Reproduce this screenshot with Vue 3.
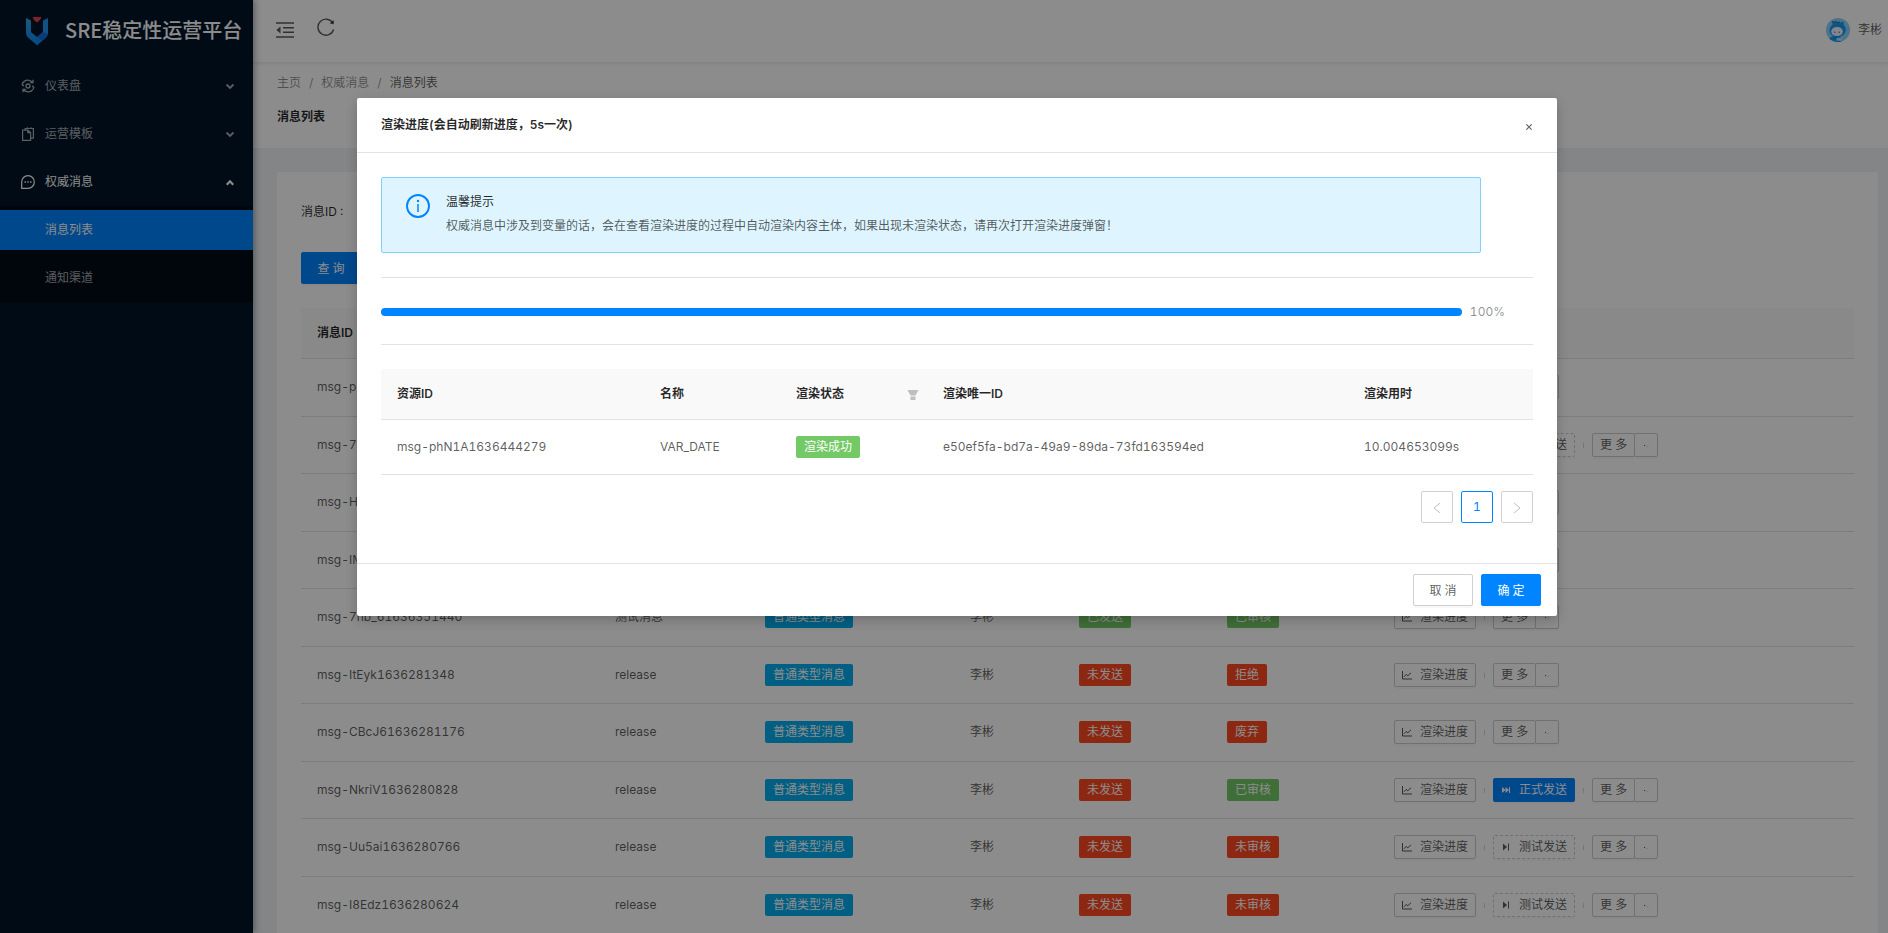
<script setup>
import { ref } from 'vue'

const messageId = ref('')

const rows = [
  { id: 'msg-p' },
  { id: 'msg-7', action: 'test' },
  { id: 'msg-H' },
  { id: 'msg-IM' },
  { id: 'msg-7hb_61636351440', name: '测试消息', type: '普通类型消息', user: '李彬', sent: '已发送', audit: '已审核' },
  { id: 'msg-ItEyk1636281348', name: 'release', type: '普通类型消息', user: '李彬', sent: '未发送', audit: '拒绝' },
  { id: 'msg-CBcJ61636281176', name: 'release', type: '普通类型消息', user: '李彬', sent: '未发送', audit: '废弃' },
  { id: 'msg-NkriV1636280828', name: 'release', type: '普通类型消息', user: '李彬', sent: '未发送', audit: '已审核', action: 'formal' },
  { id: 'msg-Uu5ai1636280766', name: 'release', type: '普通类型消息', user: '李彬', sent: '未发送', audit: '未审核', action: 'test' },
  { id: 'msg-I8Edz1636280624', name: 'release', type: '普通类型消息', user: '李彬', sent: '未发送', audit: '未审核', action: 'test' },
]

const tone = (text) => (text.startsWith('已') ? 'green' : 'red')
</script>

<template>
  <div class="shell">
    <aside class="sider">
      <div class="brand">
        <svg class="brand-logo" viewBox="0 0 22 28" aria-hidden="true">
          <defs>
            <linearGradient id="brandBlue" x1="0" y1="0" x2="0" y2="1">
              <stop offset="0" stop-color="#2fa5e8" />
              <stop offset="1" stop-color="#0a8bf0" />
            </linearGradient>
          </defs>
          <path d="M0 1 L5 3.500 V15 L11 20 V28 L2.500 21 Q0 19 0 16Z" fill="url(#brandBlue)" />
          <path d="M22 1 L17 3.500 V15 L11 20 V28 L19.500 21 Q22 19 22 16Z" fill="#2393ee" />
          <path d="M17 15 L11 20 V28 L19.500 21 L22 17Z" fill="#1668dc" />
          <path d="M11 20 L16 23.800 L11 28 L6 23.800Z" fill="#0b8fe8" />
          <path d="M6.500 0 H15.500 L14 3 L11 5.500 L8 3Z" fill="#e8414d" />
        </svg>
        <h1>SRE稳定性运营平台</h1>
      </div>
      <nav class="menu">
        <button class="menu-item" type="button">
          <svg class="menu-icon" viewBox="0 0 14 14" fill="none" stroke="currentColor" stroke-width="1.300">
            <circle cx="7" cy="7" r="2" />
            <path d="M1 6 C1.500 2.500 5 .7 8 1.300 C9.500 1.600 10.500 2.200 11.300 3 M13 8 C12.500 11.500 9 13.300 6 12.700 C4.500 12.400 3.500 11.800 2.700 11 M12 .8 V3.500 H9.200 M2 13.200 V10.500 H4.800 M1.200 6.500 H3 M11 7.500 H12.800" />
          </svg>
          <span>仪表盘</span>
          <svg class="arrow" viewBox="0 0 10 10" fill="none" stroke="currentColor" stroke-width="1.800"><path d="M1.500 3.500 L5 7 L8.500 3.500" /></svg>
        </button>
        <button class="menu-item" type="button">
          <svg class="menu-icon" viewBox="0 0 14 14" fill="none" stroke="currentColor" stroke-width="1.200">
            <path d="M4 3 H1.600 V13.300 H9.600 V11.500" />
            <path d="M4.200 1.500 H12.400 V11.200 H9.600 V5.500 L6.800 3.200 H4.200Z M6.500 .3 V2 M10 .3 V2 M6.800 3.200 V5.600 H9.600" />
          </svg>
          <span>运营模板</span>
          <svg class="arrow" viewBox="0 0 10 10" fill="none" stroke="currentColor" stroke-width="1.800"><path d="M1.500 3.500 L5 7 L8.500 3.500" /></svg>
        </button>
        <button class="menu-item open" type="button">
          <svg class="menu-icon" viewBox="0 0 14 14" fill="none" stroke="currentColor" stroke-width="1.200">
            <path d="M.7 13.300 V7 A6.300 6.300 0 1 1 7 13.300Z" />
            <path d="M3.500 7 H4.900 M6.300 7 H7.700 M9.100 7 H10.500" stroke-width="1.500" />
          </svg>
          <span>权威消息</span>
          <svg class="arrow" viewBox="0 0 10 10" fill="none" stroke="currentColor" stroke-width="2.200"><path d="M1.800 7.800 L5 4.300 L8.200 7.800" /></svg>
        </button>
        <div class="submenu">
          <a class="sub-item selected" href="#list">消息列表</a>
          <a class="sub-item" href="#channel">通知渠道</a>
        </div>
      </nav>
    </aside>

    <main class="main">
      <header class="topbar">
        <button class="icon-btn" type="button" aria-label="收起菜单">
          <svg width="18" height="16" viewBox="0 0 18 16" fill="none" stroke="currentColor" stroke-width="1.600">
            <path d="M0 1 H18 M7 5.700 H18 M7 10.300 H18 M0 15 H18" />
            <path d="M4.500 4.500 V11.500 L.3 8Z" fill="currentColor" stroke="none" />
          </svg>
        </button>
        <button class="icon-btn reload" type="button" aria-label="刷新">
          <svg width="18" height="18" viewBox="0 0 18 18" fill="none" stroke="currentColor" stroke-width="1.400">
            <path d="M15.800 5 A8 8 0 1 0 16.600 11.500" />
            <path d="M16.800 2 V6.300 L12.600 5.600Z" fill="currentColor" stroke="none" />
          </svg>
        </button>
        <div class="user">
          <svg width="24" height="24" viewBox="0 0 24 24" aria-hidden="true">
            <circle cx="12" cy="12" r="12" fill="#8fd0fa" />
            <path d="M3 20.500 Q7 17 12 17.500 Q16 18 15 23.700 Q8 25 3 20.500Z" fill="#1299ee" />
            <path d="M7 6 Q5 5 6 3 Q8 2.500 9 4.300 Q12 3.500 15 4.500 L17 3.500 Q18.500 4.500 17.500 6.500 Q20.500 9 19.500 14 Q17 19 11 18.500 Q4 18 3.500 13 Q3.500 9 7 6Z" fill="#159cf0" />
            <path d="M8 4.500 L10 3 L11 4.800 L14 3.800" fill="none" stroke="#35568c" stroke-width=".8" />
            <ellipse cx="11" cy="13.500" rx="5.800" ry="4.600" fill="#f2f3ff" />
            <circle cx="8.800" cy="14.200" r=".7" fill="#4b66ad" />
            <circle cx="13.200" cy="14.200" r=".7" fill="#4b66ad" />
            <path d="M11 20 L17 19.500 L15 23 L10 22.500Z" fill="#b8dcff" />
          </svg>
          <span>李彬</span>
        </div>
      </header>

      <section class="page-head">
        <nav class="crumbs">
          <a href="#home">主页</a><i>/</i><a href="#message">权威消息</a><i>/</i><span>消息列表</span>
        </nav>
        <h2>消息列表</h2>
      </section>

      <section class="content">
        <div class="card">
          <form class="search" @submit.prevent>
            <div class="field">
              <label for="message-id">消息ID :</label>
              <input id="message-id" v-model="messageId" type="text">
            </div>
            <button class="btn primary" type="submit">查 询</button>
          </form>
          <table class="grid list">
            <colgroup>
              <col class="c-id"><col class="c-name"><col class="c-type"><col class="c-user"><col class="c-sent"><col class="c-audit"><col>
            </colgroup>
            <thead>
              <tr><th>消息ID</th><th></th><th></th><th></th><th></th><th></th><th></th></tr>
            </thead>
            <tbody>
              <tr v-for="row in rows" :key="row.id">
                <td>{{ row.id }}</td>
                <td>{{ row.name }}</td>
                <td><span v-if="row.type" class="tag cyan">{{ row.type }}</span></td>
                <td>{{ row.user }}</td>
                <td><span v-if="row.sent" class="tag" :class="tone(row.sent)">{{ row.sent }}</span></td>
                <td><span v-if="row.audit" class="tag" :class="tone(row.audit)">{{ row.audit }}</span></td>
                <td>
                  <div class="actions">
                    <button class="small" type="button">
                      <svg width="10" height="10" viewBox="0 0 10 10" fill="none" stroke="currentColor"><path d="M.5 1 V9 H10 M2 6.800 L4.200 4.400 L5.800 5.800 L9 2.800" /></svg>
                      <span>渲染进度</span>
                    </button>
                    <i class="bar"></i>
                    <template v-if="row.action">
                      <button v-if="row.action === 'formal'" class="small solid" type="button">
                        <svg width="10" height="10" viewBox="0 0 10 10" fill="currentColor"><path d="M1 2 L4.500 5 L1 8Z M4.500 2 L8 5 L4.500 8Z M8 2 H9 V8 H8Z" /></svg>
                        <span>正式发送</span>
                      </button>
                      <button v-else class="small dashed" type="button">
                        <svg width="10" height="10" viewBox="0 0 10 10" fill="currentColor"><path d="M2 1.500 L6 5 L2 8.500Z M7 1.500 H8 V8.500 H7Z" /></svg>
                        <span>测试发送</span>
                      </button>
                      <i class="bar"></i>
                    </template>
                    <div class="split">
                      <button class="small" type="button">更 多</button>
                      <button class="small more" type="button" aria-label="展开">
                        <svg width="6" height="6" viewBox="0 0 6 6"><rect x="1" y="3" width="1" height="1" fill="currentColor" /><path d="M2.500 3.500 L4 5 L5.500 3.500" fill="none" stroke="currentColor" stroke-width=".5" opacity=".3" /></svg>
                      </button>
                    </div>
                  </div>
                </td>
              </tr>
            </tbody>
          </table>
        </div>
      </section>
    </main>

    <div class="mask">
      <div class="modal" role="dialog" aria-labelledby="modal-title">
        <header class="modal-head">
          <h3 id="modal-title">渲染进度(会自动刷新进度，5s一次)</h3>
          <button class="close" type="button" aria-label="关闭">
            <svg width="6" height="6" viewBox="0 0 6 6" fill="none" stroke="currentColor" stroke-width="1.200"><path d="M.3 .3 L5.700 5.700 M5.700 .3 L.3 5.700" /></svg>
          </button>
        </header>
        <div class="modal-body">
          <div class="alert">
            <svg width="24" height="25" viewBox="0 0 24 25" fill="none" stroke="#0084ff" stroke-width="1.900" aria-hidden="true">
              <circle cx="12" cy="13" r="11" />
              <path d="M12 11 V19" stroke-width="1.500" />
              <circle cx="12" cy="8" r="1.200" fill="#0084ff" stroke="none" />
            </svg>
            <div>
              <strong>温馨提示</strong>
              <p>权威消息中涉及到变量的话，会在查看渲染进度的过程中自动渲染内容主体，如果出现未渲染状态，请再次打开渲染进度弹窗！</p>
            </div>
          </div>
          <hr>
          <div class="progress">
            <div class="track" role="progressbar" aria-valuenow="100" aria-label="渲染进度"><div class="fill"></div></div>
            <span>100%</span>
          </div>
          <hr>
          <table class="grid detail">
            <colgroup>
              <col class="d-id"><col class="d-name"><col class="d-state"><col class="d-uid"><col>
            </colgroup>
            <thead>
              <tr>
                <th>资源ID</th>
                <th>名称</th>
                <th>
                  <div class="filter-head">
                    渲染状态
                    <svg width="12" height="12" viewBox="0 0 12 12" fill="#bfbfbf"><path d="M.5 2 H11.500 L8.500 7.500 H3.500Z M3.500 8.500 H8.500 V12 H3.500Z" /></svg>
                  </div>
                </th>
                <th>渲染唯一ID</th>
                <th>渲染用时</th>
              </tr>
            </thead>
            <tbody>
              <tr>
                <td>msg-phN1A1636444279</td>
                <td>VAR_DATE</td>
                <td><span class="tag green">渲染成功</span></td>
                <td>e50ef5fa-bd7a-49a9-89da-73fd163594ed</td>
                <td>10.004653099s</td>
              </tr>
            </tbody>
          </table>
          <div class="pager">
            <button type="button" aria-label="上一页"><svg width="8" height="12" viewBox="0 0 8 12" fill="none" stroke="currentColor"><path d="M7 2 L1 7 L7 12" /></svg></button>
            <button class="current" type="button">1</button>
            <button type="button" aria-label="下一页"><svg width="8" height="12" viewBox="0 0 8 12" fill="none" stroke="currentColor"><path d="M1 2 L7 7 L1 12" /></svg></button>
          </div>
        </div>
        <footer class="modal-foot">
          <button class="btn" type="button">取 消</button>
          <button class="btn primary" type="button">确 定</button>
        </footer>
      </div>
    </div>
  </div>
</template>

<style>
body {
  background: #f0f2f5;
}
</style>

<style scoped>
.shell {
  position: relative;
  display: flex;
  height: 100vh;
  overflow: hidden;
  font-family: Inter, "Noto Sans CJK SC", sans-serif;
  font-size: 12px;
  line-height: 18px;
  font-variant-numeric: tabular-nums;
  color: rgba(0, 0, 0, 0.65);
}
.shell * {
  box-sizing: border-box;
}
button,
input {
  font: inherit;
  color: inherit;
}
button {
  cursor: pointer;
}
a {
  color: inherit;
  text-decoration: none;
}
h1,
h2,
h3,
p {
  margin: 0;
}
h2,
h3 {
  font-size: 12px;
  font-weight: 600;
  color: rgba(0, 0, 0, 0.85);
}

/* side navigation */
.sider {
  position: relative;
  z-index: 1;
  flex: none;
  width: 253px;
  background: #001529;
  color: rgba(255, 255, 255, 0.65);
  box-shadow: 2px 0 6px rgba(0, 21, 41, 0.35);
}
.brand {
  display: flex;
  align-items: center;
  gap: 17px;
  height: 62px;
  padding-left: 26px;
}
.brand-logo {
  width: 22px;
  height: 28px;
}
.brand h1 {
  padding-bottom: 2px;
  font-family: "Noto Sans CJK SC", sans-serif;
  font-size: 20px;
  line-height: 30px;
  font-weight: 500;
  color: #fff;
  white-space: nowrap;
}
.menu-item {
  display: flex;
  align-items: center;
  width: 100%;
  height: 40px;
  margin: 4px 0 8px;
  padding: 0 18px 0 21px;
  border: 0;
  background: none;
}
.menu-item.open {
  margin-bottom: 4px;
  color: #fff;
}
.menu-icon {
  width: 14px;
  height: 14px;
  margin-right: 10px;
}
.arrow {
  width: 10px;
  height: 10px;
  margin-left: auto;
}
.submenu {
  padding: 4px 0;
  background: #000c17;
}
.sub-item {
  display: block;
  padding-left: 45px;
  line-height: 40px;
}
.sub-item.selected {
  margin-bottom: 8px;
  background: #0084ff;
  color: #fff;
}

/* header */
.main {
  flex: 1;
  min-width: 0;
}
.topbar {
  position: relative;
  display: flex;
  align-items: center;
  height: 62px;
  padding: 0 6px 2px 23px;
  background: #fff;
  box-shadow: 0 1px 4px rgba(0, 21, 41, 0.12);
}
.icon-btn {
  display: flex;
  padding: 0;
  border: 0;
  background: none;
}
.reload {
  margin: 0 0 6px 23px;
}
.user {
  display: flex;
  align-items: center;
  gap: 8px;
  margin-left: auto;
}
.page-head {
  height: 86px;
  padding: 12px 24px;
  background: #fff;
}
.crumbs {
  color: rgba(0, 0, 0, 0.45);
  margin-bottom: 16px;
}
.crumbs i {
  margin: 0 8px;
  font-style: normal;
}
.crumbs span {
  color: rgba(0, 0, 0, 0.65);
}
.content {
  padding: 24px 10px 24px 24px;
}
.card {
  padding: 24px;
  border-radius: 2px;
  background: #fff;
}
.search {
  display: flex;
  flex-direction: column;
  align-items: flex-start;
  gap: 24px;
  margin-bottom: 24px;
}
.field {
  display: flex;
  align-items: center;
  gap: 16px;
  height: 32px;
}
.field label {
  color: rgba(0, 0, 0, 0.85);
}
.field input {
  width: 240px;
  height: 32px;
  padding: 0 12px;
  border: 1px solid #d9d9d9;
  border-radius: 2px;
}
.btn {
  height: 32px;
  min-width: 60px;
  padding: 2px 15px 0;
  border: 1px solid #d0d0d0;
  border-radius: 2px;
  background: #fff;
  box-shadow: 0 2px 0 rgba(0, 0, 0, 0.03);
}
.btn.primary {
  border-color: #0084ff;
  background: #0084ff;
  color: #fff;
}

/* tables */
.grid {
  width: 100%;
  table-layout: fixed;
  border-collapse: separate;
  border-spacing: 0;
}
.grid th,
.grid td {
  padding: 0 16px;
  border-bottom: 1px solid #e2e2e2;
  text-align: left;
}
.grid th {
  height: 51px;
  background: #f9f9f9;
  font-weight: 600;
  color: rgba(0, 0, 0, 0.85);
}
.list tbody td {
  height: 58px;
  padding-bottom: 1px;
}
.list tbody tr:nth-child(even) td {
  height: 57px;
  padding-bottom: 0;
}
.detail tbody td {
  height: 55px;
}
.c-id { width: 298px; }
.c-name { width: 150px; }
.c-type { width: 205px; }
.c-user { width: 109px; }
.c-sent { width: 148px; }
.c-audit { width: 167px; }
.d-id { width: 263px; }
.d-name { width: 136px; }
.d-state { width: 147px; }
.d-uid { width: 421px; }
.tag {
  display: inline-block;
  height: 22px;
  padding: 0 8px;
  border-radius: 2px;
  line-height: 22px;
  color: #fff;
  vertical-align: middle;
}
.cyan { background: #00aeef; }
.green { background: #73c966; }
.red { background: #ff471f; }
.actions,
.split {
  display: flex;
  align-items: center;
}
.bar {
  width: 1px;
  height: 5px;
  margin: 0 8px;
  background: #d8d8d8;
}
.small {
  display: flex;
  align-items: center;
  gap: 8px;
  height: 24px;
  padding: 0 7px;
  border: 1px solid #cdcdcd;
  border-radius: 2px;
  background: #fff;
  box-shadow: 0 2px 0 rgba(0, 0, 0, 0.02);
  white-space: nowrap;
}
.small.solid {
  border-color: #0084ff;
  background: #0084ff;
  color: #fff;
}
.small.dashed {
  border-style: dashed;
}
.small.more {
  width: 24px;
  margin-left: -1px;
  padding: 0 8px;
}

/* dialog */
.mask {
  position: absolute;
  inset: 0;
  z-index: 2;
  padding: 98px 0 0 26px;
  background: rgba(0, 0, 0, 0.45);
}
.modal {
  width: 1200px;
  max-width: 100%;
  margin: 0 auto;
  border-radius: 2px;
  background: #fff;
  box-shadow: 0 4px 12px rgba(0, 0, 0, 0.2);
}
.modal-head {
  display: flex;
  align-items: center;
  justify-content: space-between;
  height: 55px;
  padding: 0 25px 0 24px;
  border-bottom: 1px solid #e2e2e2;
}
.close {
  display: flex;
  padding: 4px 0 0;
  border: 0;
  background: none;
  color: rgba(0, 0, 0, 0.6);
}
.modal-body {
  padding: 24px 24px 40px;
}
.alert {
  display: flex;
  align-items: flex-start;
  gap: 16px;
  max-width: 1100px;
  padding: 15px 24px 17px;
  border: 1px solid #7fd0fb;
  border-radius: 2px;
  background: #def5ff;
}
.alert strong {
  display: block;
  margin-bottom: 6px;
  font-weight: 400;
  color: rgba(0, 0, 0, 0.85);
}
hr {
  height: 1px;
  margin: 24px 0;
  border: 0;
  background: #e2e2e2;
}
.progress {
  display: flex;
  align-items: center;
  gap: 8px;
  height: 18px;
  padding: 2px 28px 0 0;
  color: rgba(0, 0, 0, 0.45);
}
.track {
  flex: 1;
  border-radius: 4px;
  background: #f5f5f5;
}
.fill {
  height: 8px;
  border-radius: 4px;
  background: #0084ff;
}
.filter-head {
  display: flex;
  align-items: center;
  justify-content: space-between;
  margin-right: -8px;
}
.pager {
  display: flex;
  justify-content: flex-end;
  gap: 8px;
  margin-top: 16px;
}
.pager button {
  display: flex;
  align-items: center;
  justify-content: center;
  width: 32px;
  height: 32px;
  padding: 0;
  border: 1px solid #d0d0d0;
  border-radius: 2px;
  background: #fff;
  color: #bfbfbf;
}
.pager .current {
  border-color: #0084ff;
  color: #0084ff;
}
.modal-foot {
  display: flex;
  justify-content: flex-end;
  gap: 8px;
  padding: 10px 16px;
  border-top: 1px solid #e2e2e2;
}
</style>
